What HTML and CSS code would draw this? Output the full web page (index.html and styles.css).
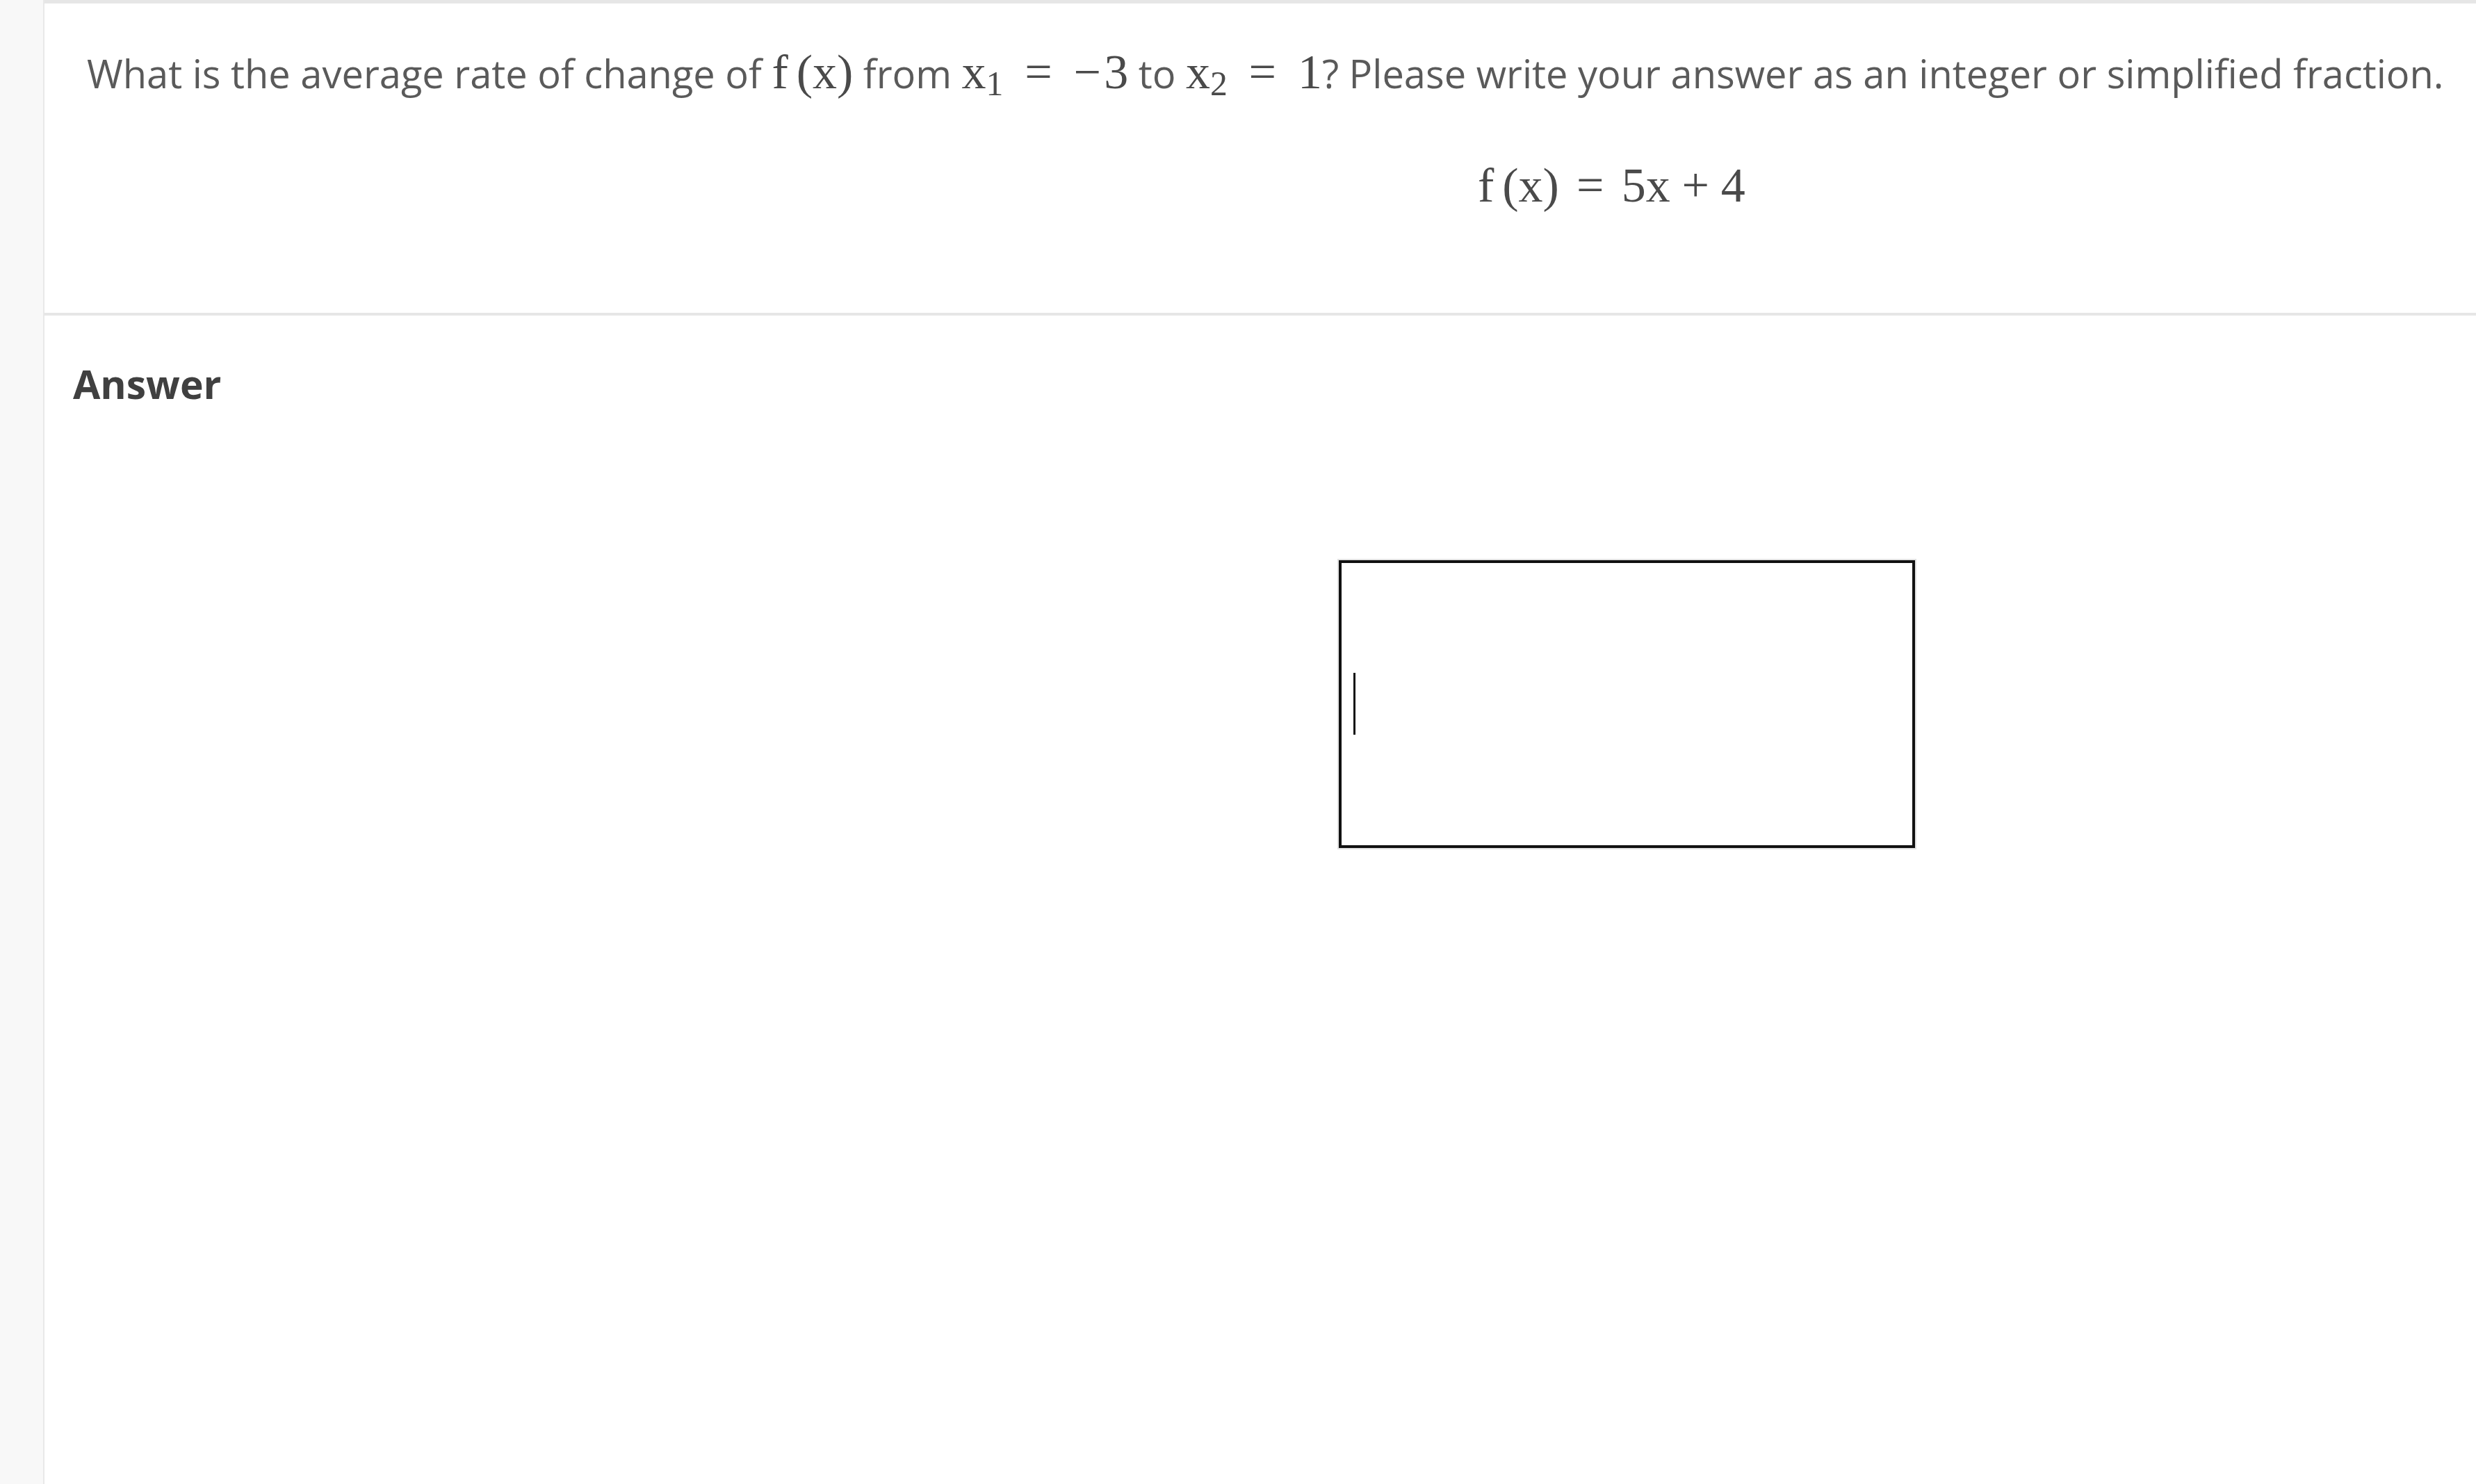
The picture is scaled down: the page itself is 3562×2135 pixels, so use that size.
FILE: index.html
```html
<!DOCTYPE html>
<html lang="en">
<head>
<meta charset="utf-8">
<title>Average rate of change</title>
<link rel="stylesheet" href="styles.css">
</head>
<body>
<div class="page">
  <aside class="sidebar"></aside>
  <main class="main">
    <section class="question">
      <p class="prompt">What is the average rate of change of <span class="math">f<span class="thin"></span>(x)</span> from <span class="math">x<sub class="sub">1</sub><span class="op op-inline">=</span><span class="minus">−</span>3</span> to <span class="math">x<sub class="sub">2</sub><span class="op op-inline">=</span>1</span>? Please write your answer as an integer or simplified fraction.</p>
      <div class="formula"><span class="math-display">f<span class="thin"></span>(x)<span class="op">=</span>5x<span class="bin">+</span>4</span></div>
    </section>
    <section class="answer">
      <h2 class="answer-label">Answer</h2>
      <div class="answer-box"><span class="caret"></span></div>
    </section>
  </main>
</div>
</body>
</html>
```

FILE: styles.css
```css
html, body {
  margin: 0;
  padding: 0;
  background: #ffffff;
  overflow: hidden;
}

.page {
  display: flex;
  min-height: 100vh;
}

.sidebar {
  width: 62px;
  flex: 0 0 62px;
  background: #f8f8f8;
  border-right: 2px solid #e8e8e8;
}

.main {
  flex: 1;
  display: flex;
  flex-direction: column;
}

.question {
  border-top: 5px solid #e6e6e6;
  border-bottom: 4px solid #e6e6e6;
  padding: 60px 0 143px 61px;
}

.prompt {
  margin: 0;
  font-family: "Open Sans", "Liberation Sans", sans-serif;
  font-size: 56px;
  line-height: 80px;
  color: #5a5a5a;
  white-space: nowrap;
}

.math {
  font-family: "Liberation Serif", "DejaVu Serif", serif;
  font-size: 70px;
  line-height: 1;
  color: #4a4a4a;
}

.thin {
  display: inline-block;
  width: 0.17em;
}

.sub {
  font-size: 0.71em;
  line-height: 1;
  vertical-align: -0.2em;
}

.op {
  margin: 0 0.36em;
}

.op-inline {
  margin: 0 0.44em;
}

.minus {
  margin-right: 0.06em;
}

.bin {
  margin: 0 0.24em;
}

.formula {
  margin-top: 81px;
  padding-left: 2001px;
  height: 80px;
  line-height: 80px;
}

.math-display {
  font-family: "Liberation Serif", "DejaVu Serif", serif;
  font-size: 70px;
  color: #4a4a4a;
  white-space: nowrap;
}

.answer {
  padding: 58px 0 0 41px;
}

.answer-label {
  margin: 0;
  font-family: "Open Sans", "Liberation Sans", sans-serif;
  font-weight: 700;
  font-size: 57px;
  line-height: 80px;
  color: #404040;
}

.answer-box {
  box-sizing: border-box;
  margin: 214px 0 0 1821px;
  width: 829px;
  height: 414px;
  border: 4px solid #111111;
  box-shadow: 0 0 0 2px #e2e2e2;
  display: flex;
  align-items: center;
  padding-left: 17px;
}

.caret {
  display: block;
  width: 3px;
  height: 89px;
  background: #111111;
}
```
